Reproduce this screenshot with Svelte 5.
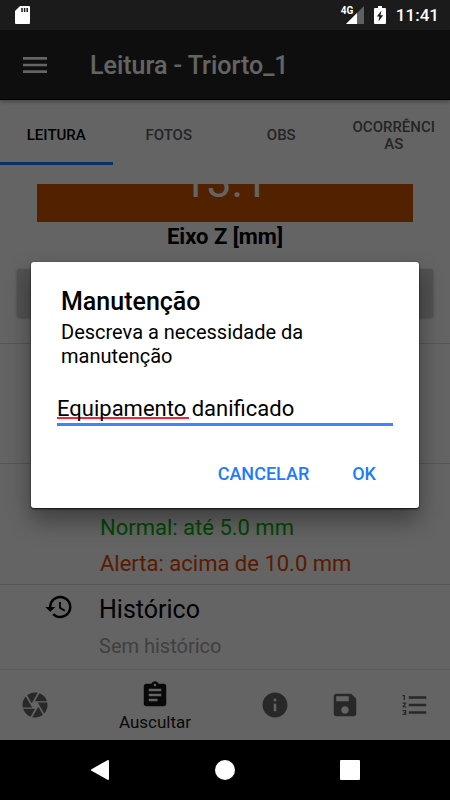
<script lang="ts">
  type Tab = { id: string; label: string };
  type NavItem = { id: string; label: string; path: string };

  const tabs: Tab[] = [
    { id: "leitura", label: "Leitura" },
    { id: "fotos", label: "Fotos" },
    { id: "obs", label: "Obs" },
    { id: "ocorrencias", label: "Ocorrências" },
  ];

  const navItems: NavItem[] = [
    {
      id: "camera",
      label: "Fotografar",
      path: "M9.4 10.5l4.77-8.26C13.47 2.09 12.75 2 12 2c-2.4 0-4.6.85-6.32 2.25l3.66 6.35.06-.1zM21.54 9c-.92-2.92-3.15-5.26-6-6.34L11.88 9h9.66zm.26 1h-7.49l.29.5 4.76 8.25C21 16.97 22 14.61 22 12c0-.69-.07-1.35-.2-2zM8.54 12l-3.9-6.75C3.01 7.03 2 9.39 2 12c0 .69.07 1.35.2 2h7.49l-1.15-2zm-6.08 3c.92 2.92 3.15 5.26 6 6.34L12.12 15H2.46zm11.27 0l-3.9 6.76c.7.15 1.42.24 2.17.24 2.4 0 4.6-.85 6.32-2.25l-3.66-6.35-.93 1.6z",
    },
    {
      id: "auscultar",
      label: "Auscultar",
      path: "M19 3h-4.18C14.4 1.84 13.3 1 12 1c-1.3 0-2.4.84-2.82 2H5c-1.1 0-2 .9-2 2v14c0 1.1.9 2 2 2h14c1.1 0 2-.9 2-2V5c0-1.1-.9-2-2-2zm-7 0c.55 0 1 .45 1 1s-.45 1-1 1-1-.45-1-1 .45-1 1-1zm2 14H7v-2h7v2zm3-4H7v-2h10v2zm0-4H7V7h10v2z",
    },
    {
      id: "info",
      label: "Informações",
      path: "M12 2C6.48 2 2 6.48 2 12s4.48 10 10 10 10-4.48 10-10S17.52 2 12 2zm1 15h-2v-6h2v6zm0-8h-2V7h2v2z",
    },
    {
      id: "save",
      label: "Salvar",
      path: "M17 3H5c-1.11 0-2 .9-2 2v14c0 1.1.89 2 2 2h14c1.1 0 2-.9 2-2V7l-4-4zm-5 16c-1.66 0-3-1.34-3-3s1.34-3 3-3 3 1.34 3 3-1.34 3-3 3zm3-10H5V5h10v4z",
    },
    {
      id: "list",
      label: "Lista",
      path: "M2 17h2v.5H3v1h1v.5H2v1h3v-4H2v1zm1-9h1V4H2v1h1v3zm-1 3h1.8L2 13.1v.9h3v-1H3.2L5 10.9V10H2v1zm5-6v2h14V5H7zm0 14h14v-2H7v2zm0-6h14v-2H7v2z",
    },
  ];

  let activeTab = $state("leitura");
  let activeNav = $state("auscultar");
  let dialogOpen = $state(true);
  let description = $state("Equipamento danificado");

  const closeDialog = (): void => {
    dialogOpen = false;
  };
</script>

<div class="screen">
  <div class="status-bar">
    <svg class="sd" width="15" height="18" viewBox="0 0 15 18">
      <path fill="#fff" d="M5 0h9q1 0 1 1v16q0 1-1 1H1q-1 0-1-1V5z" />
      <path stroke="#1b1b1b" stroke-width="1.5" d="M7 2v4M9.600 2v4M12.200 2v4" />
    </svg>
    <div class="signal">
      <span class="network">4G</span>
      <svg width="18" height="18" viewBox="0 0 18 18">
        <path fill="#606060" d="M18 0v18H0z" />
        <path fill="#fff" d="M11 7v11H0z" />
      </svg>
    </div>
    <svg width="12" height="18" viewBox="0 0 12 18">
      <path fill="#fff" d="M4 0h4v2h3q1 0 1 1v14q0 1-1 1H1q-1 0-1-1V3q0-1 1-1h3z" />
      <path fill="#1b1b1b" d="M7.500 4.500L2.800 10.500H5.300L4.500 15.500L9.200 9.300H6.500z" />
    </svg>
    <span class="clock">11:41</span>
  </div>

  <div class="app">
    <header class="toolbar">
      <button class="menu" type="button" aria-label="Menu">
        <svg width="32" height="32" viewBox="0 0 24 24">
          <path fill="currentColor" d="M3 18h18v-2H3v2zm0-5h18v-2H3v2zm0-7v2h18V6H3z" />
        </svg>
      </button>
      <h1>Leitura - Triorto_1</h1>
    </header>

    <div class="tabs" role="tablist">
      {#each tabs as tab (tab.id)}
        <button
          class="tab"
          class:active={tab.id === activeTab}
          type="button"
          role="tab"
          aria-selected={tab.id === activeTab}
          onclick={() => (activeTab = tab.id)}
        >
          {tab.label}
        </button>
      {/each}
    </div>

    <main class="content">
      <section class="reading">
        <div class="value"><span>13.1</span></div>
        <div class="axis">Eixo Z [mm]</div>
        <button
          class="action"
          type="button"
          aria-label="Manutenção"
          onclick={() => (dialogOpen = true)}
        ></button>
      </section>
      <section class="details"></section>
      <section class="limits">
        <div class="normal">Normal: até 5.0 mm</div>
        <div class="alert">Alerta: acima de 10.0 mm</div>
      </section>
      <section class="history">
        <svg width="30" height="30" viewBox="0 0 24 24">
          <path d="M13 3c-4.970 0-9 4.030-9 9H1l3.890 3.890.07.14L9 12H6c0-3.870 3.130-7 7-7s7 3.130 7 7-3.130 7-7 7c-1.930 0-3.680-.79-4.940-2.060l-1.420 1.420C8.270 19.990 10.510 21 13 21c4.970 0 9-4.030 9-9s-4.030-9-9-9zm-1 5v5l4.280 2.540.72-1.210-3.500-2.080V8H12z" />
        </svg>
        <div>
          <h2>Histórico</h2>
          <p>Sem histórico</p>
        </div>
      </section>
    </main>

    <nav class="bottom-nav">
      {#each navItems as item (item.id)}
        <button
          class="nav-item"
          class:active={item.id === activeNav}
          type="button"
          aria-label={item.label}
          onclick={() => (activeNav = item.id)}
        >
          <svg width="30" height="30" viewBox="0 0 24 24">
            <path fill="currentColor" d={item.path} />
          </svg>
          {#if item.id === activeNav}
            <span>{item.label}</span>
          {/if}
        </button>
      {/each}
    </nav>

    {#if dialogOpen}
      <div class="scrim">
        <div class="dialog" role="dialog" aria-modal="true" aria-labelledby="dialog-title">
          <h2 id="dialog-title">Manutenção</h2>
          <label for="description">Descreva a necessidade da manutenção</label>
          <input id="description" type="text" spellcheck="false" bind:value={description} />
          <div class="dialog-actions">
            <button type="button" onclick={closeDialog}>CANCELAR</button>
            <button type="button" onclick={closeDialog}>OK</button>
          </div>
        </div>
      </div>
    {/if}
  </div>

  <div class="system-nav">
    <button type="button" aria-label="Voltar">
      <svg width="20" height="20" viewBox="0 0 20 20">
        <path fill="#fff" stroke="#fff" stroke-width="2" stroke-linejoin="round" d="M18 1v18L2 10z" />
      </svg>
    </button>
    <button type="button" aria-label="Início">
      <svg width="20" height="20" viewBox="0 0 20 20">
        <circle fill="#fff" cx="10" cy="10" r="10" />
      </svg>
    </button>
    <button type="button" aria-label="Recentes">
      <svg width="20" height="20" viewBox="0 0 20 20">
        <rect fill="#fff" width="20" height="20" rx="1" />
      </svg>
    </button>
  </div>
</div>

<style>
  :global(body) {
    margin: 0;
    background: #000;
  }

  .screen {
    min-height: 100vh;
    display: flex;
    flex-direction: column;
    font-family: Roboto, sans-serif;
    color: #000;
  }

  button {
    padding: 0;
    border: 0;
    background: none;
    color: inherit;
    font-family: inherit;
    cursor: pointer;
  }

  h1,
  h2,
  p {
    margin: 0;
  }

  svg {
    display: block;
    flex: none;
  }

  .status-bar {
    height: 30px;
    padding: 0 11px 0 15px;
    display: flex;
    align-items: center;
    gap: 10px;
    background: #1b1b1b;
    color: #fff;
  }

  .sd {
    margin-right: auto;
  }

  .signal {
    position: relative;
  }

  .network {
    position: absolute;
    top: -1px;
    left: -5px;
    font-size: 10px;
    line-height: 12px;
    font-weight: 700;
  }

  .clock {
    font-size: 17px;
    font-weight: 500;
  }

  .app {
    position: relative;
    flex: 1;
    display: flex;
    flex-direction: column;
    background: #fafafa;
  }

  .toolbar {
    height: 69px;
    padding: 1px 0 0 19px;
    box-sizing: border-box;
    flex-basis: 70px;
    display: flex;
    align-items: center;
    gap: 39px;
    background: #232323;
    border-bottom: 1px solid #000;
    color: #fafafa;
    box-shadow: 0 2px 4px rgba(0, 0, 0, 0.3);
  }

  .toolbar h1 {
    font-size: 25px;
    font-weight: 500;
  }

  .tabs {
    display: grid;
    grid-template-columns: repeat(4, 1fr);
  }

  .tab {
    height: 65px;
    padding: 9px 12px 0;
    border-bottom: 3px solid transparent;
    color: #5c5c5c;
    font-size: 15px;
    line-height: 17px;
    font-weight: 500;
    text-transform: uppercase;
    word-break: break-all;
  }

  .tab.active {
    border-bottom-color: #1a78ff;
    color: #000;
  }

  .content {
    flex: 1;
    padding-top: 19px;
  }

  .content section {
    border-bottom: 1px solid #d8d8d8;
  }

  .content section:last-child {
    border-bottom: 0;
  }

  .reading {
    padding: 0 17px 26px;
    text-align: center;
  }

  .value {
    height: 38px;
    margin: 0 20px;
    display: flex;
    align-items: flex-end;
    justify-content: center;
    overflow: hidden;
    background: #cd5500;
    color: #fafafa;
    font-size: 44px;
    line-height: 80px;
  }

  .axis {
    font-size: 22px;
    line-height: 30px;
    font-weight: 700;
  }

  .action {
    width: 100%;
    height: 48px;
    margin-top: 17px;
    display: block;
    border-radius: 2px;
    background: #cdcdcd;
    box-shadow: 0 1px 3px rgba(0, 0, 0, 0.3);
  }

  .details {
    height: 119px;
  }

  .limits {
    padding: 46px 16px 2px 100px;
    font-size: 22px;
    line-height: 36px;
  }

  .normal {
    color: #00b400;
  }

  .alert {
    color: #dc4600;
  }

  .history {
    padding: 7px 16px 3px 44px;
    display: flex;
    gap: 25px;
  }

  .history h2 {
    font-size: 25px;
    line-height: 36px;
    font-weight: 400;
  }

  .history p {
    color: #a0a0a0;
    font-size: 20px;
    line-height: 36px;
  }

  .bottom-nav {
    height: 70px;
    display: flex;
    border-top: 1px solid #e6e6e6;
  }

  .nav-item {
    flex: 7;
    display: flex;
    flex-direction: column;
    align-items: center;
    justify-content: center;
    color: #646464;
    font-size: 17px;
    line-height: 24px;
  }

  .nav-item.active {
    flex-grow: 17;
    padding-top: 3px;
    color: #161616;
  }

  .scrim {
    position: absolute;
    inset: 0;
    display: flex;
    align-items: center;
    justify-content: center;
    background: rgba(0, 0, 0, 0.6);
  }

  .dialog {
    box-sizing: border-box;
    width: calc(100% - 62px);
    padding: 22px 26px 12px;
    display: flex;
    flex-direction: column;
    border-radius: 3px;
    background: #fff;
    box-shadow:
      0 1px 2px rgba(0, 0, 0, 0.8),
      0 12px 24px rgba(0, 0, 0, 0.4);
  }

  .dialog h2 {
    padding: 0 4px;
    font-size: 25px;
    line-height: 36px;
    font-weight: 500;
  }

  .dialog label {
    padding: 0 4px;
    font-size: 20px;
    line-height: 24px;
  }

  .dialog input {
    height: 30px;
    margin-top: 25px;
    padding: 0;
    border: 0;
    border-bottom: 3px solid #3b86ff;
    background: linear-gradient(#ff2030, #ff2030) 0 24px / 132px 2px no-repeat;
    font-family: inherit;
    font-size: 22px;
    color: #000;
    outline: none;
  }

  .dialog-actions {
    margin-top: 25px;
    padding-right: 17px;
    display: flex;
    justify-content: flex-end;
    gap: 43px;
  }

  .dialog-actions button {
    height: 45px;
    color: #1a7cff;
    font-size: 18px;
    font-weight: 500;
  }

  .system-nav {
    height: 60px;
    padding: 0 37px;
    display: grid;
    grid-template-columns: repeat(3, 1fr);
    background: #000;
  }

  .system-nav button {
    display: flex;
    align-items: center;
    justify-content: center;
  }
</style>
